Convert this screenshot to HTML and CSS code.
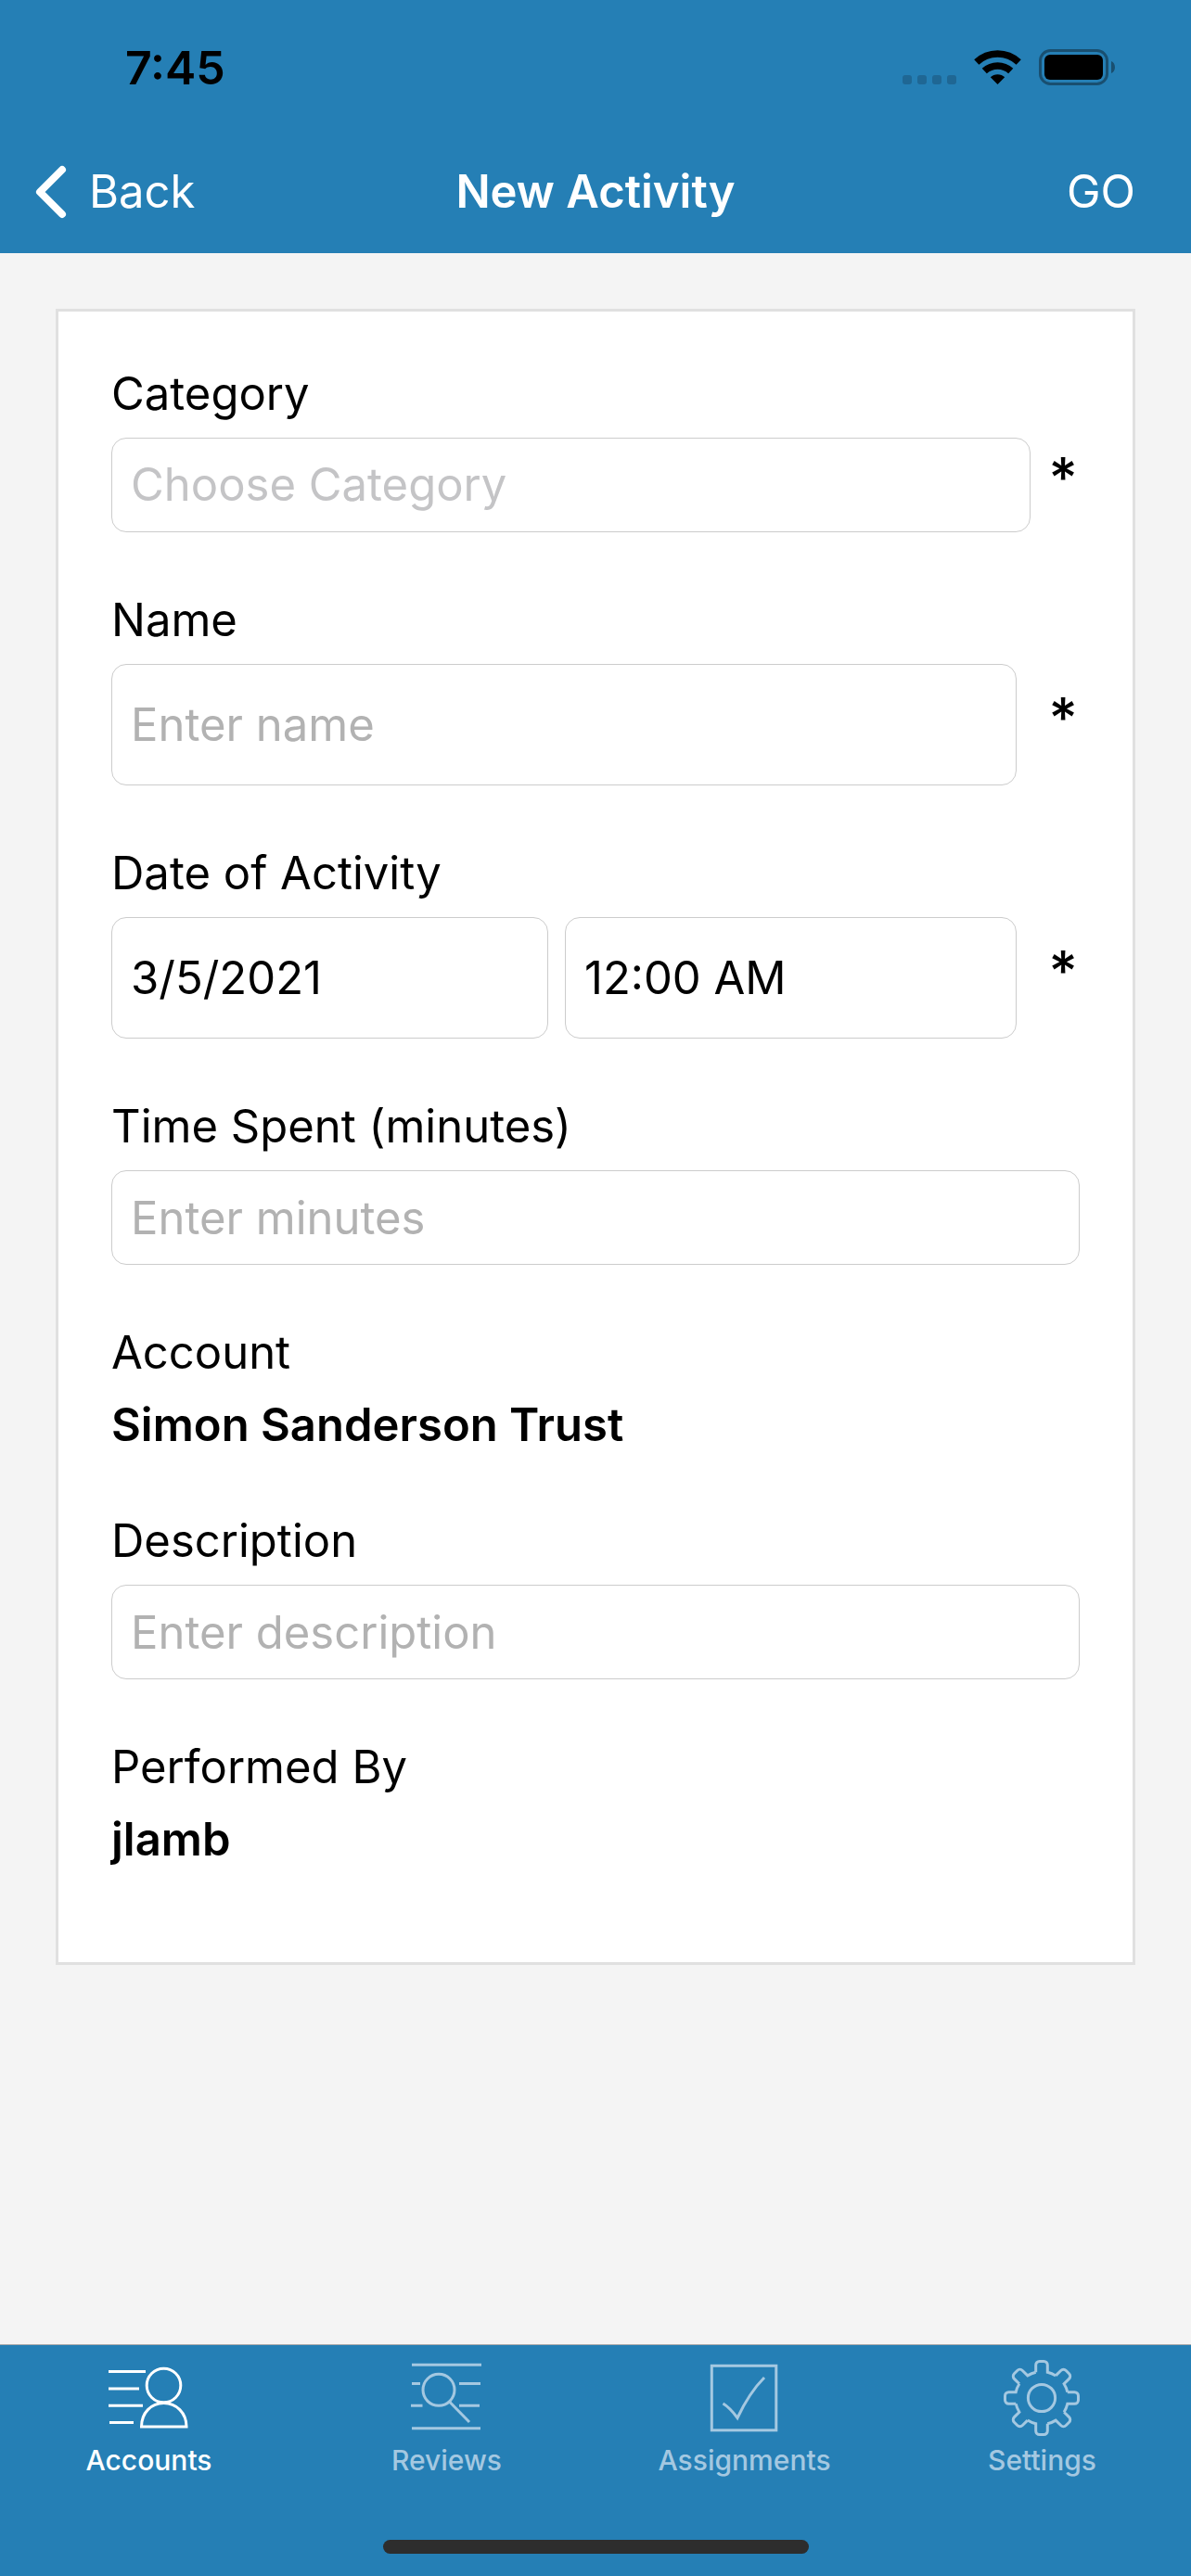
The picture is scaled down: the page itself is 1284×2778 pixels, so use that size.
FILE: index.html
```html
<!DOCTYPE html>
<html lang="en">
<head>
<meta charset="utf-8">
<meta name="viewport" content="width=device-width, initial-scale=1">
<title>New Activity</title>
<link rel="stylesheet" href="styles.css">
</head>
<body>
<div class="app">
  <header class="header">
    <div class="status">
      <span class="time">7:45</span>
      <svg class="status-icons" width="230" height="40" viewBox="973 53 230 40" aria-hidden="true">
        <g fill="#1f6794">
          <rect x="973" y="81" width="10" height="10" rx="3"/>
          <rect x="989" y="81" width="10" height="10" rx="3"/>
          <rect x="1005" y="81" width="10" height="10" rx="3"/>
          <rect x="1021" y="81" width="10" height="10" rx="3"/>
        </g>
        <g fill="none" stroke="#000" stroke-width="7.500">
          <path d="M1052.800 67A33 33 0 0 1 1098.200 67"/>
          <path d="M1061.300 76.500A20.800 20.800 0 0 1 1089.700 76.500"/>
        </g>
        <path d="M1075.500 91L1067.800 83.300A11 11 0 0 1 1083.200 83.300Z"/>
        <rect x="1121.500" y="54.500" width="72" height="36" rx="11" fill="none" stroke="#194f70" stroke-width="3"/>
        <rect x="1126" y="59" width="63" height="27" rx="6"/>
        <path d="M1198 66C1203.300 68 1203.300 77 1198 79Z" fill="#194f70"/>
      </svg>
    </div>
    <nav class="navbar">
      <button class="nav-button back" type="button">
        <svg width="34" height="58" viewBox="0 0 34 58" aria-hidden="true"><path d="M29 5L5 29L29 53" fill="none" stroke="#fff" stroke-width="8" stroke-linecap="round" stroke-linejoin="round"/></svg>
        <span>Back</span>
      </button>
      <h1 class="title">New Activity</h1>
      <button class="nav-button go" type="submit" form="activity">GO</button>
    </nav>
  </header>

  <main class="content">
    <form class="card" id="activity">
      <div class="field">
        <label for="category">Category</label>
        <div class="row row-tight">
          <select class="control picker" id="category" required>
            <option value="" selected>Choose Category</option>
          </select>
          <span class="required">*</span>
        </div>
      </div>
      <div class="field">
        <label for="name">Name</label>
        <div class="row">
          <input class="control tall" id="name" type="text" placeholder="Enter name">
          <span class="required">*</span>
        </div>
      </div>
      <div class="field">
        <label for="date">Date of Activity</label>
        <div class="row">
          <div class="pair">
            <input class="control tall" id="date" type="text" value="3/5/2021">
            <input class="control tall" type="text" value="12:00 AM" aria-label="Time of Activity">
          </div>
          <span class="required">*</span>
        </div>
      </div>
      <div class="field">
        <label for="minutes">Time Spent (minutes)</label>
        <input class="control" id="minutes" type="text" placeholder="Enter minutes">
      </div>
      <div class="field">
        <span>Account</span>
        <strong class="value">Simon Sanderson Trust</strong>
      </div>
      <div class="field">
        <label for="description">Description</label>
        <input class="control" id="description" type="text" placeholder="Enter description">
      </div>
      <div class="field">
        <span>Performed By</span>
        <strong class="value">jlamb</strong>
      </div>
    </form>
  </main>

  <footer class="footer">
    <nav class="tabs">
      <a class="tab active" href="#accounts">
        <svg width="87" height="84" viewBox="117 2544 87 84" aria-hidden="true">
          <path d="M117 2557.500H157M117 2576H150M117 2594.300H154M118 2612.500H144"/>
          <circle cx="176.500" cy="2572.500" r="18.300"/>
          <path d="M152.500 2617C152.500 2602 163 2591.500 176.500 2591.500S201 2602 201 2617Z"/>
        </svg>
        <span>Accounts</span>
      </a>
      <a class="tab" href="#reviews">
        <svg width="77" height="84" viewBox="443 2544 77 84" aria-hidden="true">
          <path d="M444 2550.300H519M444 2618.700H518M444 2570.500H453M495 2570.500H518M443 2594.300H455.500M495 2594.300H517"/>
          <circle cx="473" cy="2577.300" r="17"/>
          <path d="M484.500 2590L506 2612"/>
        </svg>
        <span>Reviews</span>
      </a>
      <a class="tab" href="#assignments">
        <svg width="75" height="84" viewBox="765 2544 75 84" aria-hidden="true">
          <rect x="767.300" y="2551.300" width="69.500" height="69.500"/>
          <path d="M779.500 2592Q787 2596.500 795 2607.500Q808 2580 824 2564"/>
        </svg>
        <span>Assignments</span>
      </a>
      <a class="tab" href="#settings">
        <svg width="83" height="84" viewBox="-41 -42 83 84" aria-hidden="true">
          <defs><path id="tooth" d="M-6.300 -27.800V-35.500A4 4 0 0 1 -2.300 -39.500H2.300A4 4 0 0 1 6.300 -35.500V-27.800A28.500 28.500 0 0 1 15.200 -24.100"/></defs>
          <use href="#tooth"/>
          <use href="#tooth" transform="rotate(45)"/>
          <use href="#tooth" transform="rotate(90)"/>
          <use href="#tooth" transform="rotate(135)"/>
          <use href="#tooth" transform="rotate(180)"/>
          <use href="#tooth" transform="rotate(225)"/>
          <use href="#tooth" transform="rotate(270)"/>
          <use href="#tooth" transform="rotate(315)"/>
          <circle r="14.600"/>
        </svg>
        <span>Settings</span>
      </a>
    </nav>
    <div class="home-indicator"></div>
  </footer>
</div>
</body>
</html>
```
FILE: styles.css
```css
* {
  box-sizing: border-box;
}

body {
  margin: 0;
  background: #f4f4f4;
  color: #000;
  font: 400 49px/62px Inter, "Liberation Sans", sans-serif;
}

.app {
  display: flex;
  flex-direction: column;
  min-height: 100vh;
}

.header {
  background: #257fb5;
  color: #fff;
}

.status {
  display: flex;
  align-items: center;
  justify-content: space-between;
  height: 141px;
  padding: 5px 81px 0 135px;
}

.time {
  color: #000;
  font-size: 50px;
  font-weight: 600;
}

.navbar {
  display: grid;
  grid-template-columns: 1fr auto 1fr;
  align-items: center;
  height: 132px;
}

.nav-button {
  display: flex;
  align-items: center;
  gap: 24px;
  padding: 0;
  border: 0;
  background: none;
  color: inherit;
  font: inherit;
}

.back {
  justify-self: start;
  padding-left: 38px;
}

.go {
  justify-self: end;
  padding-right: 60px;
}

.title {
  margin: 0;
  font-size: 49px;
  font-weight: 600;
}

.content {
  flex: 1;
  padding: 60px;
}

.card {
  display: flex;
  flex-direction: column;
  gap: 64px;
  padding: 58px 57px 102px;
  border: 3px solid #e0e0e0;
  background: #fff;
}

.field {
  display: flex;
  flex-direction: column;
  gap: 16px;
}

.row {
  display: flex;
  align-items: center;
  gap: 32px;
}

.row-tight {
  gap: 17px;
}

.pair {
  display: grid;
  flex: 1;
  grid-template-columns: 471fr 487fr;
  gap: 18px;
  min-width: 0;
}

.control {
  width: 100%;
  min-width: 0;
  height: 102px;
  padding: 0 20px;
  border: 1px solid #ccc;
  border-radius: 16px;
  background: #fff;
  color: #000;
  font: inherit;
  appearance: none;
}

.row > .control {
  flex: 1;
}

.tall {
  height: 131px;
}

.control::placeholder {
  color: #b2b2b2;
  opacity: 1;
}

.picker {
  color: #c4c4c6;
}

.required {
  width: 36px;
  padding-bottom: 16px;
  font-size: 60px;
  font-weight: 500;
  text-align: center;
}

.value {
  font-weight: 600;
  line-height: 61px;
}

.footer {
  display: flex;
  flex-direction: column;
  align-items: center;
  border-top: 1px solid #a9a9ab;
  padding-bottom: 24px;
  background: #257fb5;
}

.tabs {
  display: grid;
  grid-template-columns: repeat(4, 1fr);
  width: 100%;
  height: 210px;
  padding-top: 15px;
}

.tab {
  display: flex;
  flex-direction: column;
  align-items: center;
  gap: 7px;
  color: #a4c8e1;
  font-size: 30px;
  font-weight: 500;
  line-height: 36px;
  text-decoration: none;
}

.tab svg {
  fill: none;
  stroke: currentColor;
  stroke-width: 3;
}

.active {
  color: #fff;
}

.home-indicator {
  width: 459px;
  height: 15px;
  border-radius: 8px;
  background: #2d2d2d;
}
```
